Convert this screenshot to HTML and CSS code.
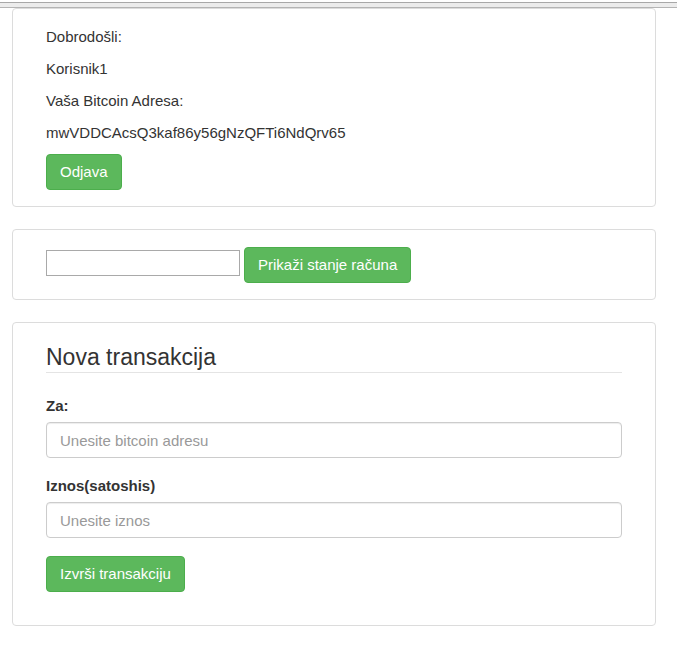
FILE: index.html
```html
<!DOCTYPE html>
<html>
<head>
<meta charset="utf-8">
<link rel="stylesheet" href="styles.css">
</head>
<body>
<div class="topbar"></div>
<div class="panel panel-user">
  <p class="line">Dobrodošli:</p>
  <p class="line">Korisnik1</p>
  <p class="line">Vaša Bitcoin Adresa:</p>
  <p class="line">mwVDDCAcsQ3kaf86y56gNzQFTi6NdQrv65</p>
  <button class="btn btn-odjava">Odjava</button>
</div>
<div class="panel panel-balance">
  <input class="plain-input" type="text">
  <button class="btn btn-balance">Prikaži stanje računa</button>
</div>
<div class="panel panel-tx">
  <h3 class="title">Nova transakcija</h3>
  <label class="label label-first">Za:</label>
  <input class="form-input" type="text" placeholder="Unesite bitcoin adresu">
  <label class="label">Iznos(satoshis)</label>
  <input class="form-input" type="text" placeholder="Unesite iznos">
  <button class="btn btn-tx">Izvrši transakciju</button>
</div>
</body>
</html>
```

FILE: styles.css
```css
html, body {
  margin: 0;
  padding: 0;
  background: #fff;
}
body {
  font-family: "Liberation Sans", Arial, sans-serif;
  font-size: 15px;
  color: #333;
}
.topbar {
  margin-top: 2px;
  height: 4px;
  border-top: 1px solid #a8a8a8;
  border-bottom: 1px solid #b4b4b4;
  background: #ececec;
}
.panel {
  box-sizing: border-box;
  width: 644px;
  margin: 0 0 0 12px;
  border: 1px solid #dcdcdc;
  border-radius: 4px;
  padding-left: 33px;
  padding-right: 33px;
  display: flex;
  flex-direction: column;
  align-items: flex-start;
}
.panel-user {
  margin-top: 0;
  padding-top: 17px;
  padding-bottom: 16px;
}
.line {
  margin: 0;
  height: 32px;
  line-height: 22px;
}
.btn {
  box-sizing: border-box;
  height: 36px;
  padding: 0 13px;
  background: #5cb85c;
  border: 1px solid #4cae4c;
  border-radius: 4px;
  color: #fff;
  font-family: "Liberation Sans", Arial, sans-serif;
  font-size: 15px;
  line-height: 34px;
  cursor: pointer;
}
.btn-odjava {
  margin-top: 0;
}
.panel-balance {
  margin-top: 22px;
  padding-top: 17px;
  padding-bottom: 16px;
  flex-direction: row;
  align-items: center;
  gap: 4px;
}
.plain-input {
  box-sizing: border-box;
  width: 194px;
  height: 26px;
  margin: 0 0 4px 0;
  border: 1px solid #a9a9a9;
  border-radius: 0;
  padding: 2px 4px;
  font-size: 14px;
}
.panel-tx {
  margin-top: 22px;
  padding-top: 20px;
  padding-bottom: 33px;
  align-items: stretch;
}
.title {
  margin: 0;
  font-size: 23px;
  font-weight: 400;
  line-height: 28px;
  padding-bottom: 1px;
  border-bottom: 1px solid #e4e4e4;
}
.label {
  display: block;
  font-weight: 700;
  font-size: 15px;
  line-height: 20px;
  margin-top: 18px;
  margin-bottom: 6px;
}
.label-first {
  margin-top: 23px;
}
.form-input {
  box-sizing: border-box;
  width: 100%;
  height: 36px;
  margin: 0;
  border: 1px solid #ccc;
  border-radius: 4px;
  padding: 0 13px;
  font-family: "Liberation Sans", Arial, sans-serif;
  font-size: 15px;
  color: #555;
  box-shadow: inset 0 1px 1px rgba(0,0,0,0.075);
}
.form-input::placeholder {
  color: #999;
}
.btn-tx {
  align-self: flex-start;
  margin-top: 18px;
}
```
